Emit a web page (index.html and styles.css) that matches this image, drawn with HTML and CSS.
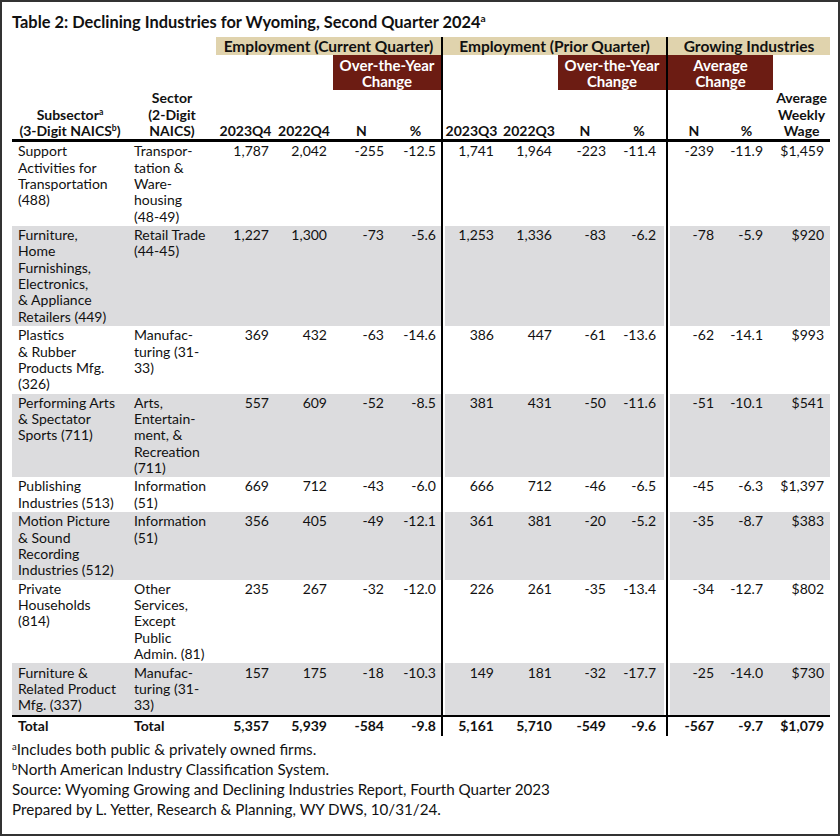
FILE: index.html
```html
<!DOCTYPE html>
<html lang="en">
<head>
<meta charset="utf-8">
<title>Table 2: Declining Industries for Wyoming</title>
<link rel="stylesheet" href="styles.css">
</head>
<body>
<div class="frame">
  <h1 class="title">Table 2: Declining Industries for Wyoming, Second Quarter 2024<sup>a</sup></h1>
  <table class="data">
    <colgroup>
      <col style="width:116px"><col style="width:88px">
      <col style="width:59px"><col style="width:58px"><col style="width:57px"><col style="width:51px">
      <col style="width:59px"><col style="width:58px"><col style="width:54px"><col style="width:54px">
      <col style="width:54px"><col style="width:53px"><col style="width:57px">
    </colgroup>
    <thead>
      <tr class="band">
        <th colspan="2"></th>
        <th colspan="4" class="tan">Employment (Current Quarter)</th>
        <th colspan="4" class="tan div">Employment (Prior Quarter)</th>
        <th colspan="3" class="tan div">Growing Industries</th>
      </tr>
      <tr class="sub">
        <th></th><th></th><th></th><th></th>
        <th colspan="2" class="maroon">Over-the-Year<br>Change</th>
        <th class="div"></th><th></th>
        <th colspan="2" class="maroon">Over-the-Year<br>Change</th>
        <th colspan="2" class="maroon div">Average<br>Change</th>
        <th></th>
      </tr>
      <tr class="cols">
        <th>Subsector<sup>a</sup><br>(3-Digit NAICS<sup>b</sup>)</th>
        <th>Sector<br>(2-Digit<br>NAICS)</th>
        <th>2023Q4</th><th>2022Q4</th><th>N</th><th>%</th>
        <th class="div">2023Q3</th><th>2022Q3</th><th>N</th><th>%</th>
        <th class="div">N</th><th>%</th>
        <th>Average<br>Weekly<br>Wage</th>
      </tr>
    </thead>
    <tbody>
      <tr>
        <td>Support<br>Activities for<br>Transportation<br>(488)</td>
        <td>Transpor-<br>tation &amp;<br>Ware-<br>housing<br>(48-49)</td>
        <td>1,787</td><td>2,042</td><td>-255</td><td>-12.5</td>
        <td>1,741</td><td>1,964</td><td>-223</td><td>-11.4</td>
        <td>-239</td><td>-11.9</td><td>$1,459</td>
      </tr>
      <tr class="alt">
        <td>Furniture,<br>Home<br>Furnishings,<br>Electronics,<br>&amp; Appliance<br>Retailers (449)</td>
        <td>Retail Trade<br>(44-45)</td>
        <td>1,227</td><td>1,300</td><td>-73</td><td>-5.6</td>
        <td>1,253</td><td>1,336</td><td>-83</td><td>-6.2</td>
        <td>-78</td><td>-5.9</td><td>$920</td>
      </tr>
      <tr>
        <td>Plastics<br>&amp; Rubber<br>Products Mfg.<br>(326)</td>
        <td>Manufac-<br>turing (31-<br>33)</td>
        <td>369</td><td>432</td><td>-63</td><td>-14.6</td>
        <td>386</td><td>447</td><td>-61</td><td>-13.6</td>
        <td>-62</td><td>-14.1</td><td>$993</td>
      </tr>
      <tr class="alt">
        <td>Performing Arts<br>&amp; Spectator<br>Sports (711)</td>
        <td>Arts,<br>Entertain-<br>ment, &amp;<br>Recreation<br>(711)</td>
        <td>557</td><td>609</td><td>-52</td><td>-8.5</td>
        <td>381</td><td>431</td><td>-50</td><td>-11.6</td>
        <td>-51</td><td>-10.1</td><td>$541</td>
      </tr>
      <tr>
        <td>Publishing<br>Industries (513)</td>
        <td>Information<br>(51)</td>
        <td>669</td><td>712</td><td>-43</td><td>-6.0</td>
        <td>666</td><td>712</td><td>-46</td><td>-6.5</td>
        <td>-45</td><td>-6.3</td><td>$1,397</td>
      </tr>
      <tr class="alt">
        <td>Motion Picture<br>&amp; Sound<br>Recording<br>Industries (512)</td>
        <td>Information<br>(51)</td>
        <td>356</td><td>405</td><td>-49</td><td>-12.1</td>
        <td>361</td><td>381</td><td>-20</td><td>-5.2</td>
        <td>-35</td><td>-8.7</td><td>$383</td>
      </tr>
      <tr>
        <td>Private<br>Households<br>(814)</td>
        <td>Other<br>Services,<br>Except<br>Public<br>Admin. (81)</td>
        <td>235</td><td>267</td><td>-32</td><td>-12.0</td>
        <td>226</td><td>261</td><td>-35</td><td>-13.4</td>
        <td>-34</td><td>-12.7</td><td>$802</td>
      </tr>
      <tr class="alt">
        <td>Furniture &amp;<br>Related Product<br>Mfg. (337)</td>
        <td>Manufac-<br>turing (31-<br>33)</td>
        <td>157</td><td>175</td><td>-18</td><td>-10.3</td>
        <td>149</td><td>181</td><td>-32</td><td>-17.7</td>
        <td>-25</td><td>-14.0</td><td>$730</td>
      </tr>
      <tr class="total">
        <td>Total</td>
        <td>Total</td>
        <td>5,357</td><td>5,939</td><td>-584</td><td>-9.8</td>
        <td>5,161</td><td>5,710</td><td>-549</td><td>-9.6</td>
        <td>-567</td><td>-9.7</td><td>$1,079</td>
      </tr>
    </tbody>
  </table>
  <div class="notes">
    <p><sup>a</sup>Includes both public &amp; privately owned firms.</p>
    <p><sup>b</sup>North American Industry Classification System.</p>
    <p>Source: Wyoming Growing and Declining Industries Report, Fourth Quarter 2023</p>
    <p>Prepared by L. Yetter, Research &amp; Planning, WY DWS, 10/31/24.</p>
  </div>
</div>
</body>
</html>
```

FILE: styles.css
```css
html, body {
  margin: 0;
  padding: 0;
  background: #fff;
}

body {
  font-family: Lato, "Open Sans", sans-serif;
  color: #111;
  font-size: 14px;
}

.frame {
  width: 840px;
  height: 836px;
  box-sizing: border-box;
  border: 2px solid #333;
  padding: 10px 8px 0 10px;
}

.title {
  margin: 0 0 5px 0;
  font-size: 16.4px;
  line-height: 20px;
  font-weight: 700;
  white-space: nowrap;
}

sup {
  font-size: 0.62em;
  line-height: 0;
  vertical-align: 0.55em;
}

.data {
  width: 818px;
  table-layout: fixed;
  border-collapse: separate;
  border-spacing: 0;
}

.data th,
.data td {
  white-space: nowrap;
  box-sizing: border-box;
}

.data th {
  font-weight: 700;
  text-align: center;
  padding: 0;
}

.band th {
  height: 18px;
  line-height: 18px;
  font-size: 15.5px;
  vertical-align: middle;
}

.tan {
  background: #e0d3ad;
}

.sub th {
  font-size: 15px;
  line-height: 16.3px;
  padding: 1.5px 0 1.3px;
  vertical-align: middle;
}

.maroon {
  background: #6c1c13;
  color: #fff;
}

.cols th {
  line-height: 16.3px;
  vertical-align: bottom;
  padding: 0;
  border-bottom: 3px solid #000;
}

.data .div {
  border-left: 2px solid #000;
}

.data td {
  vertical-align: top;
  line-height: 16.3px;
  padding: 1.15px 6px 1.15px 6px;
  text-align: right;
}

.data td:nth-child(1),
.data td:nth-child(2) {
  text-align: left;
}

.data td:nth-child(6) {
  padding-right: 5px;
}

.data td:nth-child(10),
.data td:nth-child(12) {
  padding-right: 10px;
}

.data td:nth-child(7),
.data td:nth-child(11) {
  border-left: 2px solid #000;
}

.data tr.alt td {
  background: #dcdcde;
}

.data tr.alt td:nth-child(7),
.data tr.alt td:nth-child(11) {
  box-shadow: inset 2px 0 0 #fff;
}

.data tr.alt td:nth-child(10) {
  box-shadow: inset -2px 0 0 #fff;
}

.data tr.total td {
  font-weight: 700;
  border-top: 2px solid #000;
  line-height: 18px;
  padding-top: 0;
  padding-bottom: 1px;
}

.notes {
  margin-top: 3px;
  font-size: 15.2px;
}

.notes p {
  margin: 0;
  line-height: 20px;
}
```
